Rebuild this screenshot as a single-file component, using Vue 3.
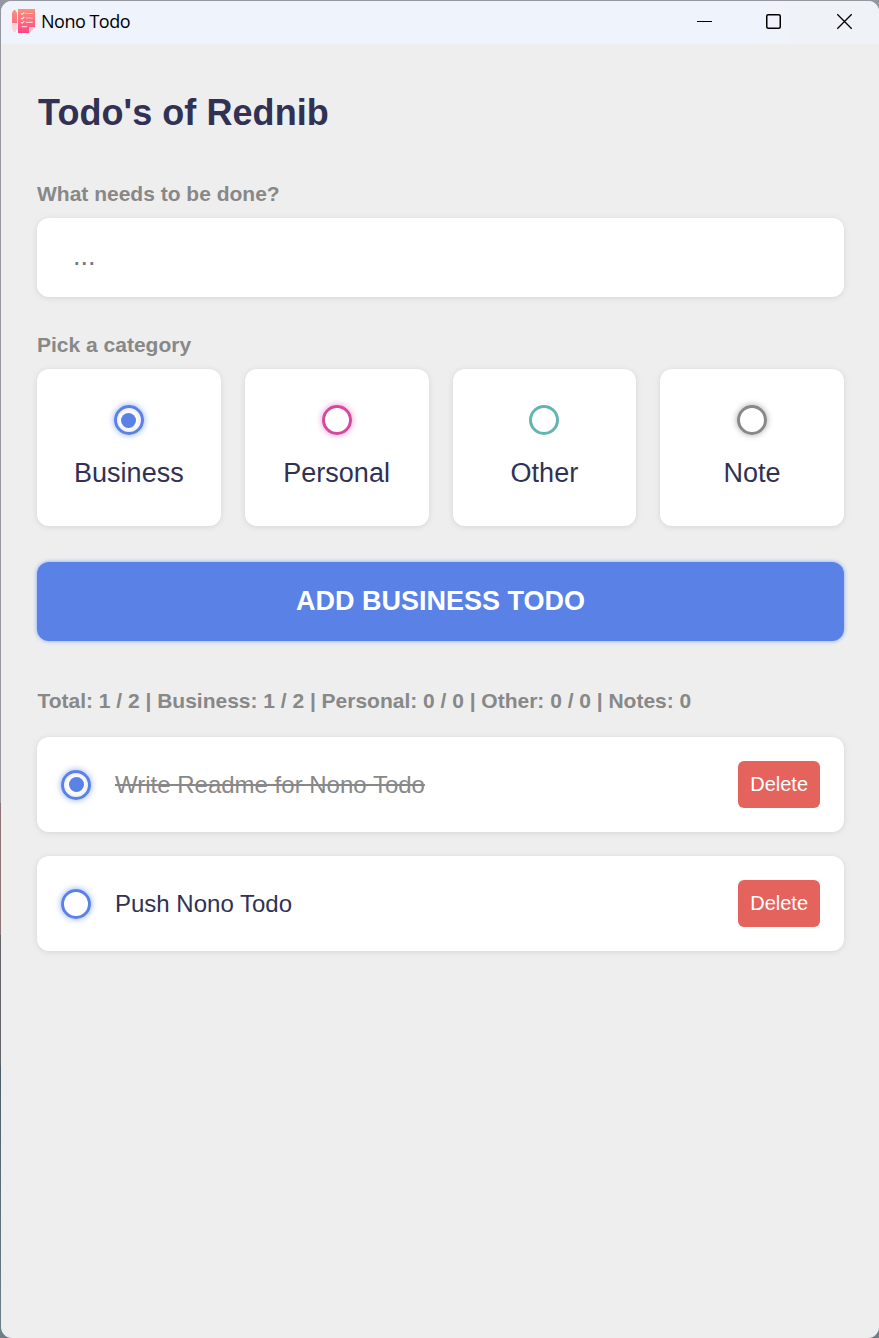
<script setup>
import { ref, computed } from 'vue'

const categories = [
  { id: 'business', label: 'Business' },
  { id: 'personal', label: 'Personal' },
  { id: 'other', label: 'Other' },
  { id: 'note', label: 'Note' }
]
const name = ref('Rednib')
const content = ref('')
const category = ref('business')
const todos = ref([
  { id: 1, text: 'Write Readme for Nono Todo', category: 'business', done: true },
  { id: 2, text: 'Push Nono Todo', category: 'business', done: false }
])

const count = (id) => {
  const list = todos.value.filter((t) => !id || t.category === id)
  return `${list.filter((t) => t.done).length} / ${list.length}`
}
const summary = computed(
  () =>
    `Total: ${count()} | Business: ${count('business')} | Personal: ${count('personal')} | Other: ${count('other')} | Notes: ${todos.value.filter((t) => t.category === 'note').length}`
)

function add() {
  if (!content.value.trim()) return
  todos.value.push({ id: Date.now(), text: content.value, category: category.value, done: false })
  content.value = ''
}
function remove(id) {
  todos.value = todos.value.filter((t) => t.id !== id)
}
</script>

<template>
  <div class="desktop">
    <div class="window">
      <header class="titlebar">
        <svg class="logo" width="24" height="26" viewBox="0 0 24 26">
          <defs>
            <linearGradient id="page" x1="0" y1="0" x2="0" y2="1">
              <stop offset="0" stop-color="#ff9078" />
              <stop offset="1" stop-color="#ff4488" />
            </linearGradient>
            <linearGradient id="pen" x1="0" y1="0" x2="0" y2="1">
              <stop offset="0" stop-color="#fd8f7c" />
              <stop offset="1" stop-color="#f9707f" />
            </linearGradient>
          </defs>
          <path d="M0 5Q0 2.500 1.500 2V1h2v1Q5 3 5 5v9H0z" fill="url(#pen)" />
          <path d="M0 14h5v5l-1.500 4h-2L0 19z" fill="#fbd3d4" />
          <path d="M6 0h17v18l-6 6H6z" fill="url(#page)" />
          <path d="M17 24v-6h6z" fill="#ffc5cf" />
          <path d="M13.700 4.500h7M13.700 9h7M13.700 13.300h7M9.500 17.600h5.500" stroke="#ffc9c4" stroke-width="1.200" />
          <path d="M9 4.300l1.200 1.200L12.300 3.300M9 8.800l1.200 1.200L12.300 7.800M9 13.100l1.200 1.200L12.300 12.100" fill="none" stroke="#ffe9e6" stroke-width="1.100" />
        </svg>
        <span class="caption">Nono Todo</span>
        <svg class="control" width="70" height="43" viewBox="0 0 70 43">
          <path d="M27 20.500h15" stroke="#000" />
        </svg>
        <svg class="control" width="70" height="43" viewBox="0 0 70 43">
          <rect x="26.750" y="13.750" width="13.500" height="13.500" rx="1.500" fill="none" stroke="#000" stroke-width="1.500" />
        </svg>
        <svg class="control" width="70" height="43" viewBox="0 0 70 43">
          <path d="M27.300 13.300l14.400 14.400M41.700 13.300L27.300 27.700" stroke="#000" stroke-width="1.300" />
        </svg>
      </header>

      <main class="app">
        <h1>Todo's of {{ name }}</h1>

        <form @submit.prevent="add">
          <h4>What needs to be done?</h4>
          <input v-model="content" class="field" type="text" placeholder="..." />

          <h4>Pick a category</h4>
          <div class="options">
            <label v-for="c in categories" :key="c.id" class="option">
              <input v-model="category" class="native" type="radio" name="category" :value="c.id" />
              <span class="bubble" :class="[c.id, { checked: category === c.id }]"></span>
              <span>{{ c.label }}</span>
            </label>
          </div>

          <button class="submit" type="submit">ADD {{ category.toUpperCase() }} TODO</button>
        </form>

        <h4 class="summary">{{ summary }}</h4>
        <div class="list">
          <div v-for="t in todos" :key="t.id" class="item">
            <label class="toggle">
              <input v-model="t.done" class="native" type="checkbox" />
              <span class="bubble" :class="[t.category, { checked: t.done }]"></span>
            </label>
            <span class="text"><span :class="{ done: t.done }">{{ t.text }}</span></span>
            <button class="delete" @click="remove(t.id)">Delete</button>
          </div>
        </div>
      </main>
    </div>
  </div>
</template>

<style>
body {
  margin: 0;
}
</style>

<style scoped>
* {
  box-sizing: border-box;
  margin: 0;
}
.desktop {
  height: 1338px;
  padding: 1px 0 0 1px;
  overflow: hidden;
  font-family: "Liberation Sans", Arial, sans-serif;
  color: #313154;
  background: linear-gradient(180deg, #94979f 0, #94979f 803px, #8a7476 803px, #8a7476 935px, #606468 935px, #606468 1066px, #4c5d6b 1066px, #6d7f88 1338px);
}
.window {
  height: 1337px;
  border-radius: 11px;
  background: #eee;
  overflow: hidden;
}
.titlebar {
  display: flex;
  height: 43px;
  padding-left: 11px;
  background: linear-gradient(90deg, #eff3fb 0, #eff3fb 88%, #eff3f8 91%);
}
.logo {
  flex: none;
  margin-top: 8px;
}
.caption {
  flex: 1;
  padding-left: 5px;
  font: 18px/41px "Open Sans", "Noto Sans", sans-serif;
  letter-spacing: -0.5px;
  color: #000;
}
.control {
  flex: none;
}
.control:last-child {
  margin-right: -1px;
}
.app {
  padding: 48px 35px 0 36px;
}
h1 {
  padding-left: 1px;
  font-size: 36px;
  line-height: 42px;
  letter-spacing: 0.06px;
  margin-bottom: 48px;
}
h4 {
  font-size: 21px;
  line-height: 24px;
  margin-bottom: 12px;
  color: #888;
}
.field,
.option,
.item {
  background: #fff;
  border-radius: 12px;
  box-shadow: 0 1px 6px rgba(0, 0, 0, 0.1);
}
.field {
  display: block;
  width: 100%;
  height: 79px;
  padding: 23px 36px 25px;
  border: 0;
  margin-bottom: 36px;
  font: 27px "Liberation Sans", Arial, sans-serif;
}
.field::placeholder {
  color: #757575;
}
.options {
  display: grid;
  grid-template-columns: repeat(4, 1fr);
  gap: 24px;
  margin-bottom: 36px;
}
.option {
  display: flex;
  flex-direction: column;
  align-items: center;
  height: 157px;
  padding-top: 36px;
  font-size: 27px;
  line-height: 31px;
}
.option .bubble {
  margin-bottom: 23px;
}
.native {
  display: none;
}
.bubble {
  display: flex;
  align-items: center;
  justify-content: center;
  width: 30px;
  height: 30px;
  border: 3px solid var(--tone);
  border-radius: 50%;
  box-shadow: 0 0 6px var(--glow);
}
.bubble.checked {
  box-shadow: 0 0 6px var(--glow), inset 0 0 5px rgba(0, 30, 90, 0.15);
}
.bubble.checked::after {
  content: "";
  width: 15px;
  height: 15px;
  border-radius: 50%;
  background: var(--tone);
}
.business {
  --tone: #5a81e6;
  --glow: rgba(58, 110, 250, 0.6);
}
.personal {
  --tone: #d3499e;
  --glow: rgba(230, 70, 170, 0.6);
}
.other {
  --tone: #62b5b0;
  --glow: transparent;
}
.note {
  --tone: #888;
  --glow: rgba(0, 0, 0, 0.35);
}
.submit {
  display: block;
  width: 100%;
  height: 79px;
  padding-bottom: 2px;
  border: 0;
  border-radius: 12px;
  background: #5a81e6;
  color: #fff;
  box-shadow: 0 0 4px rgba(58, 110, 250, 0.6);
  font: bold 27px "Liberation Sans", Arial, sans-serif;
  margin-bottom: 48px;
}
.summary {
  padding-left: 0.5px;
  letter-spacing: -0.01px;
  margin-bottom: 24px;
}
.list {
  display: grid;
  gap: 24px;
}
.item {
  display: flex;
  align-items: center;
  height: 95px;
  padding: 0 24px;
}
.toggle {
  margin-right: 24px;
}
.text {
  flex: 1;
  font-size: 24px;
  line-height: 28px;
}
.done {
  color: #888;
  text-decoration: line-through;
}
.delete {
  height: 47px;
  padding: 0 12px;
  border: 0;
  border-radius: 6px;
  background: #e4635c;
  color: #fff;
  font: 20px "Liberation Sans", Arial, sans-serif;
}
</style>
